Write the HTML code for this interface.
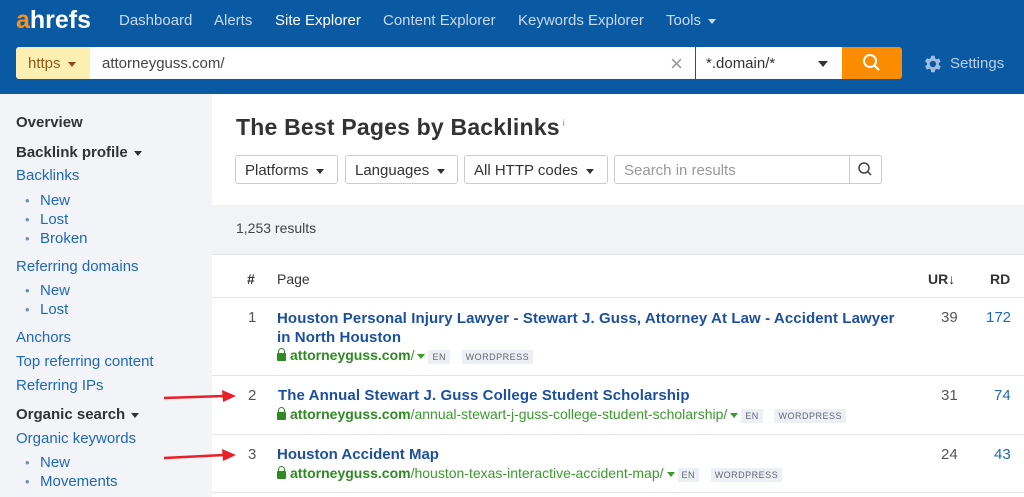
<!DOCTYPE html>
<html><head><meta charset="utf-8"><style>
*{margin:0;padding:0;box-sizing:border-box}
body{width:1024px;height:497px;overflow:hidden;font-family:"Liberation Sans",Arial,sans-serif;background:#fff;position:relative}
.a{position:absolute;white-space:nowrap}
#hd{position:absolute;left:0;top:0;width:1024px;height:94px;background:#0a5aa3}
.nav{top:12px;font-size:15px;color:#c9d9ee}
.sb{position:absolute;left:0;top:94px;width:212px;height:403px;background:#f3f4f7}
.sl{font-size:15px;color:#1f67bb}
.sh{font-size:15px;color:#333;font-weight:bold}
.bul{font-size:15px;color:#1f67bb}
.bul:before{content:"•";color:#6b8fbf;position:absolute;left:-15px;font-size:13px;top:1px}
.btn{top:155px;height:29px;border:1px solid #ccc;border-radius:3px;font-size:15px;color:#333;padding:6px 9px;background:#fff}
.car{display:inline-block;width:0;height:0;border-left:4px solid transparent;border-right:4px solid transparent;border-top:5px solid #333;vertical-align:middle;margin-left:8px}
.t{font-size:15px;font-weight:bold;color:#1d4fa0}
.u{font-size:14px;color:#3a9a2d}
.u b{color:#2e8a22}
.tag{font-size:9px;background:#eceff3;color:#667;padding:2px 4px;letter-spacing:.5px}
.n{font-size:15px;color:#555}
.hr{position:absolute;left:212px;width:812px;height:1px;background:#e6e6e6}
.lock{display:inline-block;width:9px;height:8px;background:#2e8a22;border-radius:1px;position:relative;margin-right:4px;vertical-align:-1px}
.lock:before{content:"";position:absolute;left:1px;top:-5px;width:5px;height:5px;border:1.5px solid #2e8a22;border-bottom:none;border-radius:4px 4px 0 0}
.gc{display:inline-block;border-left:4px solid transparent;border-right:4px solid transparent;border-top:5px solid #3a9a2d;margin:0 3px;vertical-align:middle}
</style></head><body>
<div id="hd"></div>
<div class="a" style="left:16px;top:6px;font-size:25px;font-weight:bold;color:#fff"><span style="color:#f7931d">a</span>hrefs</div>
<div class="a nav" style="left:119px">Dashboard</div>
<div class="a nav" style="left:214px">Alerts</div>
<div class="a nav" style="left:275px;color:#fff">Site Explorer</div>
<div class="a nav" style="left:383px">Content Explorer</div>
<div class="a nav" style="left:518px">Keywords Explorer</div>
<div class="a nav" style="left:666px">Tools <span class="car" style="border-top-color:#c9d9ee;margin-left:3px"></span></div>
<div class="a" style="left:16px;top:47px;width:74px;height:32px;background:#fdefb2;border-radius:3px 0 0 3px;font-size:15px;color:#8a5a1a;padding:8px 12px">https <span class="car" style="border-top-color:#8a4a1a;margin-left:3px"></span></div>
<div class="a" style="left:90px;top:47px;width:605px;height:32px;background:#fff;font-size:15px;color:#444;padding:8px 12px">attorneyguss.com/<span style="position:absolute;right:12px;top:4px;font-size:22px;color:#999">×</span></div>
<div class="a" style="left:696px;top:47px;width:146px;height:32px;background:#fff;font-size:15px;color:#333;padding:8px 10px">*.domain/*<span class="car" style="position:absolute;right:14px;top:14px;border-top-width:6px;border-left-width:5px;border-right-width:5px"></span></div>
<div class="a" style="left:842px;top:47px;width:60px;height:32px;background:#fb8c00;border-radius:0 3px 3px 0">
<svg width="60" height="32"><circle cx="28" cy="14" r="6" fill="none" stroke="#fff" stroke-width="2"/><line x1="32" y1="18" x2="37" y2="23" stroke="#fff" stroke-width="2.2"/></svg></div>
<svg class="a" style="left:921px;top:53px" width="22" height="22" viewBox="0 0 24 24"><path fill="#9fbde0" d="M19.4 13a7.5 7.5 0 000-2l2.1-1.6-2-3.5-2.5 1a7 7 0 00-1.7-1L15 3h-4l-.4 2.7a7 7 0 00-1.7 1l-2.5-1-2 3.5L6.6 11a7.5 7.5 0 000 2l-2.1 1.6 2 3.5 2.5-1a7 7 0 001.7 1L11 21h4l.4-2.7a7 7 0 001.7-1l2.5 1 2-3.5zM13 15.5a3.5 3.5 0 110-7 3.5 3.5 0 010 7z"/></svg>
<div class="a" style="left:950px;top:55px;font-size:15px;color:#b9cfea">Settings</div>

<div class="sb"></div>
<div class="a sh" style="left:16px;top:114px">Overview</div>
<div class="a sh" style="left:16px;top:144px">Backlink profile <span class="car" style="margin-left:2px"></span></div>
<div class="a sl" style="left:16px;top:167px">Backlinks</div>
<div class="a bul" style="left:40px;top:192px">New</div>
<div class="a bul" style="left:40px;top:211px">Lost</div>
<div class="a bul" style="left:40px;top:230px">Broken</div>
<div class="a sl" style="left:16px;top:258px">Referring domains</div>
<div class="a bul" style="left:40px;top:282px">New</div>
<div class="a bul" style="left:40px;top:301px">Lost</div>
<div class="a sl" style="left:16px;top:329px">Anchors</div>
<div class="a sl" style="left:16px;top:353px">Top referring content</div>
<div class="a sl" style="left:16px;top:377px">Referring IPs</div>
<div class="a sh" style="left:16px;top:406px">Organic search <span class="car" style="margin-left:2px"></span></div>
<div class="a sl" style="left:16px;top:430px">Organic keywords</div>
<div class="a bul" style="left:40px;top:454px">New</div>
<div class="a bul" style="left:40px;top:473px">Movements</div>

<div class="a" style="left:236px;top:114px;font-size:23px;font-weight:bold;color:#333;letter-spacing:0.2px">The Best Pages by Backlinks<sup style="font-size:9px;font-weight:normal;color:#888;margin-left:3px">i</sup></div>
<div class="a btn" style="left:235px;width:103px">Platforms<span class="car"></span></div>
<div class="a btn" style="left:345px;width:113px">Languages<span class="car"></span></div>
<div class="a btn" style="left:464px;width:144px">All HTTP codes<span class="car"></span></div>
<div class="a btn" style="left:614px;width:268px;color:#999">Search in results</div>
<div class="a" style="left:849px;top:155px;width:33px;height:29px;border:1px solid #ccc;border-radius:0 3px 3px 0;background:#fff"><svg width="31" height="27"><circle cx="14" cy="12" r="5" fill="none" stroke="#444" stroke-width="1.5"/><line x1="17.5" y1="15.5" x2="21" y2="19" stroke="#444" stroke-width="1.5"/></svg></div>

<div class="a" style="left:212px;top:205px;width:812px;height:49px;background:#f2f3f5"></div>
<div class="a" style="left:236px;top:220px;font-size:14px;color:#444">1,253 results</div>
<div class="hr" style="top:254px"></div>
<div class="a" style="left:247px;top:271px;font-size:14px;font-weight:bold;color:#333">#</div>
<div class="a" style="left:277px;top:271px;font-size:14px;color:#333">Page</div>
<div class="a" style="left:928px;top:271px;font-size:14px;font-weight:bold;color:#333">UR<span style="font-weight:normal">↓</span></div>
<div class="a" style="left:990px;top:271px;font-size:14px;font-weight:bold;color:#333">RD</div>
<div class="hr" style="top:297px"></div>

<div class="a n" style="left:248px;top:309px">1</div>
<div class="a t" style="left:277px;top:309px;line-height:19px;letter-spacing:0.1px">Houston Personal Injury Lawyer - Stewart J. Guss, Attorney At Law - Accident Lawyer<br>in North Houston</div>
<div class="a u" style="left:277px;top:347px"><span class="lock"></span><b>attorneyguss.com</b>/<span class="gc"></span><span class="tag">EN</span> &nbsp; <span class="tag">WORDPRESS</span></div>
<div class="a n" style="left:941px;top:309px">39</div>
<div class="a n" style="left:986px;top:309px;color:#1f67bb">172</div>
<div class="hr" style="top:375px"></div>

<div class="a n" style="left:248px;top:387px">2</div>
<div class="a t" style="left:278px;top:387px;letter-spacing:0.1px">The Annual Stewart J. Guss College Student Scholarship</div>
<div class="a u" style="left:277px;top:406px"><span class="lock"></span><b>attorneyguss.com</b>/annual-stewart-j-guss-college-student-scholarship/<span class="gc"></span><span class="tag">EN</span> &nbsp; <span class="tag">WORDPRESS</span></div>
<div class="a n" style="left:941px;top:387px">31</div>
<div class="a n" style="left:994px;top:387px;color:#1f67bb">74</div>
<div class="hr" style="top:434px"></div>

<div class="a n" style="left:248px;top:446px">3</div>
<div class="a t" style="left:277px;top:446px">Houston Accident Map</div>
<div class="a u" style="left:277px;top:465px"><span class="lock"></span><b>attorneyguss.com</b>/houston-texas-interactive-accident-map/<span class="gc"></span><span class="tag">EN</span> &nbsp; <span class="tag">WORDPRESS</span></div>
<div class="a n" style="left:941px;top:446px">24</div>
<div class="a n" style="left:994px;top:446px;color:#1f67bb">43</div>
<div class="hr" style="top:492px"></div>

<svg class="a" style="left:160px;top:385px" width="80" height="85"><g stroke="#e8202a" stroke-width="2.5" fill="#e8202a"><line x1="4" y1="13" x2="64" y2="11"/><polygon points="76,11 62,5 63,17" stroke="none"/><line x1="4" y1="73" x2="64" y2="70"/><polygon points="76,70 62,64 63,76" stroke="none"/></g></svg>
</body></html>
